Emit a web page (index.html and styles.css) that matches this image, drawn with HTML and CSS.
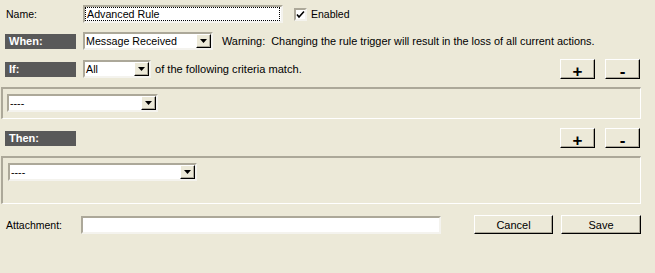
FILE: index.html
```html
<!DOCTYPE html>
<html lang="en">
<head>
    <meta charset="UTF-8">
    <title>Advanced Rule</title>
    <link rel="stylesheet" href="styles.css">
</head>
<body>
    <div class="rule-form">
        <div class="row row-name">
            <label class="field-label">Name:</label>
            <div class="textbox focused w-name"><span class="focus-ring">Advanced Rule</span></div>
            <div class="check">
                <span class="check-box">
                    <svg width="9" height="9" viewBox="0 0 9 9"><path d="M1 4.5 L3 7 L8 1.5" fill="none" stroke="#000" stroke-width="1.6"/></svg>
                </span>
                Enabled
            </div>
        </div>

        <div class="row row-when">
            <div class="tag">When:</div>
            <div class="dropdown w-when">
                <span class="value">Message Received</span>
                <span class="arrow"><svg width="7" height="4" viewBox="0 0 7 4"><path d="M0 0 H7 L3.5 4 Z" fill="#000"/></svg></span>
            </div>
            <span class="note">Warning:&nbsp; Changing the rule trigger will result in the loss of all current actions.</span>
        </div>

        <div class="row row-if">
            <div class="tag">If:</div>
            <div class="dropdown w-all">
                <span class="value">All</span>
                <span class="arrow"><svg width="7" height="4" viewBox="0 0 7 4"><path d="M0 0 H7 L3.5 4 Z" fill="#000"/></svg></span>
            </div>
            <span class="note">of the following criteria match.</span>
            <div class="pm">
                <button class="btn pm-btn">+</button>
                <button class="btn pm-btn">-</button>
            </div>
        </div>

        <div class="group">
            <div class="dropdown w-crit">
                <span class="value">----</span>
                <span class="arrow"><svg width="7" height="4" viewBox="0 0 7 4"><path d="M0 0 H7 L3.5 4 Z" fill="#000"/></svg></span>
            </div>
        </div>

        <div class="row row-then">
            <div class="tag">Then:</div>
            <div class="pm">
                <button class="btn pm-btn">+</button>
                <button class="btn pm-btn">-</button>
            </div>
        </div>

        <div class="group tall">
            <div class="dropdown w-action">
                <span class="value">----</span>
                <span class="arrow"><svg width="7" height="4" viewBox="0 0 7 4"><path d="M0 0 H7 L3.5 4 Z" fill="#000"/></svg></span>
            </div>
        </div>

        <div class="row row-attach">
            <label class="field-label attach-label">Attachment:</label>
            <div class="textbox w-attach"></div>
            <div class="actions">
                <button class="btn act-btn">Cancel</button>
                <button class="btn act-btn save">Save</button>
            </div>
        </div>
    </div>
</body>
</html>
```

FILE: styles.css
```css
body {
    margin: 0;
    background: #ece9d8;
    font-family: "Liberation Sans", Arial, sans-serif;
    font-size: 10.5px;
    color: #000;
}
.rule-form {
    width: 641px;
    padding-top: 5px;
}
.row {
    display: flex;
    align-items: center;
    padding-left: 5px;
}
.row-name {
    height: 18px;
}
.row-when {
    height: 18px;
    margin-top: 9px;
}
.row-if {
    height: 20px;
    margin-top: 9px;
    padding-right: 1px;
}
.row-then {
    height: 20px;
    margin-top: 9px;
    padding-right: 1px;
}
.row-attach {
    height: 19px;
    margin-top: 11px;
}
.field-label {
    width: 78px;
    padding-left: 1px;
    box-sizing: border-box;
}
.attach-label {
    width: 76px;
}
.tag {
    width: 71px;
    height: 15px;
    margin-right: 7px;
    background: #595959;
    color: #fff;
    font-weight: bold;
    font-size: 11px;
    line-height: 15px;
    padding-left: 4px;
    box-sizing: border-box;
}
.textbox {
    height: 18px;
    box-sizing: border-box;
    background: #fff;
    border: 2px solid;
    border-color: #aca899 #f4f3ee #f4f3ee #aca899;
    display: flex;
    align-items: center;
    font-size: 10.7px;
}
.w-name {
    width: 200px;
}
.w-attach {
    width: 360px;
}
.focus-ring {
    flex: 1;
    height: 12px;
    line-height: 12px;
    border: 1px dotted #000;
    padding-left: 1px;
    margin: 0 1px 0 0;
}
.check {
    display: flex;
    align-items: center;
    margin-left: 11px;
    gap: 4px;
}
.check-box {
    width: 13px;
    height: 13px;
    box-sizing: border-box;
    background: #fff;
    border: 2px solid;
    border-color: #aca899 #f4f3ee #f4f3ee #aca899;
    display: flex;
    align-items: center;
    justify-content: center;
}
.dropdown {
    height: 18px;
    box-sizing: border-box;
    background: #fff;
    border: 2px solid;
    border-color: #aca899 #f4f3ee #f4f3ee #aca899;
    display: flex;
    align-items: center;
    font-size: 10.7px;
}
.dropdown .value {
    flex: 1;
    padding-left: 1px;
}
.dropdown .arrow {
    width: 15px;
    height: 14px;
    box-sizing: border-box;
    background: #ece9d8;
    border: 1px solid;
    border-color: #fff #000 #000 #fff;
    box-shadow: inset -1px -1px #aca899;
    display: flex;
    align-items: center;
    justify-content: center;
}
.w-when {
    width: 130px;
}
.w-all {
    width: 68px;
}
.w-crit {
    width: 151px;
}
.w-action {
    width: 189px;
}
.note {
    margin-left: 9px;
    font-size: 10.9px;
}
.row-if .note {
    margin-left: 4px;
    font-size: 11.1px;
}
.pm {
    margin-left: auto;
    display: flex;
    gap: 10px;
}
.btn {
    background: #ece9d8;
    border: 1px solid;
    border-color: #fff #000 #000 #fff;
    box-shadow: inset -1px -1px #aca899;
    font-family: "Liberation Sans", Arial, sans-serif;
    padding: 0;
    color: #000;
}
.pm-btn {
    width: 35px;
    height: 20px;
    font-size: 17px;
    font-weight: bold;
    line-height: 20px;
    padding-top: 2px;
}
.group {
    margin: 8px 0 0 1px;
    width: 640px;
    height: 32px;
    box-sizing: border-box;
    border: 2px solid;
    border-color: #aca899 #fff #fff #aca899;
    border-width: 2px 1px 1px 2px;
    padding: 5px 4px;
}
.group.tall {
    height: 48px;
}
.group.tall .dropdown {
    margin-left: 1px;
}
.actions {
    margin-left: auto;
    display: flex;
    gap: 8px;
}
.act-btn {
    width: 79px;
    height: 19px;
    font-size: 11px;
}
.act-btn.save {
    width: 80px;
}
```
